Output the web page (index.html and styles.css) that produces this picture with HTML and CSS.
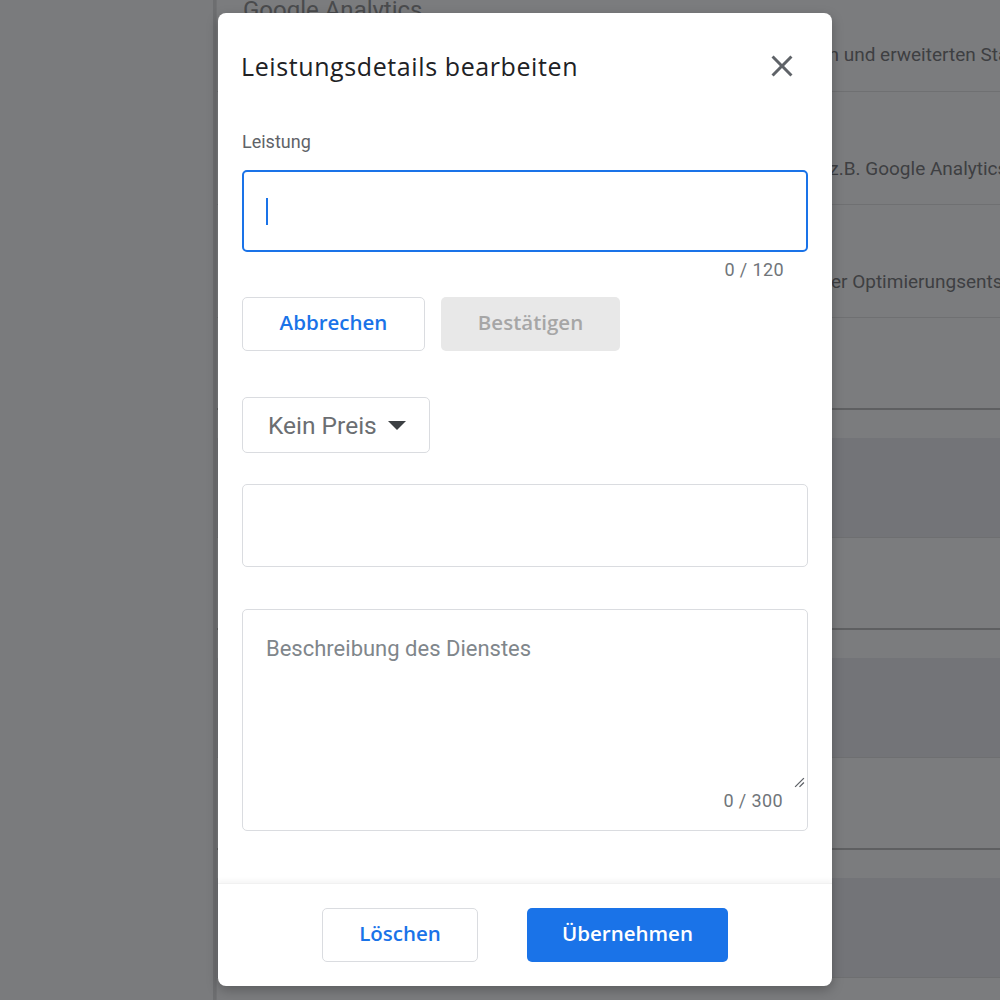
FILE: index.html
```html
<!DOCTYPE html>
<html lang="de">
<head>
    <meta charset="UTF-8">
    <meta name="viewport" content="width=device-width, initial-scale=1.0">
    <title>Leistungsdetails bearbeiten</title>

    <link rel="stylesheet" href="styles.css">
</head>
<body>
    <!-- Seite im Hintergrund (abgedunkelt) -->
    <div class="page">
        <div class="sidebar"></div>

        <div class="main">
            <div class="section first">
                <div class="row head">
                    <div class="sectionTitle">Google Analytics</div>
                    <div class="rowText">Verknüpfen Sie Ihr Konto um Zugriff auf Besucherdaten, Auswertungen und erweiterten Statistiken zu erhalten</div>
                </div>
                <div class="row">
                    <div class="rowText">Binden Sie externe Tracking- und Analysedienste für Ihre Website ein, z.B. Google Analytics</div>
                </div>
                <div class="row">
                    <div class="rowText">Erhalten Sie persönliche Unterstützung seitens unserer Experten bei der Optimierungsentscheidung</div>
                </div>
                <div class="row empty"></div>
            </div>

            <div class="section">
                <div class="gap"></div>
                <div class="band"></div>
                <div class="plain"></div>
            </div>
            <div class="section">
                <div class="gap"></div>
                <div class="band"></div>
                <div class="plain"></div>
            </div>
            <div class="section">
                <div class="gap"></div>
                <div class="band"></div>
                <div class="plain"></div>
            </div>
        </div>
    </div>

    <!-- Dialog -->
    <div class="modal">
        <div class="modalHeader">
            <h2>Leistungsdetails bearbeiten</h2>
            <button class="closeBtn" aria-label="Schließen">
                <svg width="36" height="36" viewBox="0 0 24 24">
                    <path d="M19 6.41 17.59 5 12 10.59 6.41 5 5 6.41 10.59 12 5 17.59 6.41 19 12 13.41 17.59 19 19 17.59 13.41 12z" fill="#5f6368"/>
                </svg>
            </button>
        </div>

        <div class="modalBody">
            <label class="fieldLabel" for="itemTitle">Leistung</label>
            <div class="inputBox focused">
                <span class="caret"></span>
            </div>
            <div class="counter">0 / 120</div>

            <div class="editBtns">
                <button class="btn outline">Abbrechen</button>
                <button class="btn disabled">Bestätigen</button>
            </div>

            <div class="priceSelect">
                <span>Kein Preis</span>
                <svg width="18" height="9" viewBox="7 10 10 5">
                    <path d="M7 10l5 5 5-5z" fill="#3c4043"/>
                </svg>
            </div>

            <div class="inputBox plainBox"></div>

            <div class="textareaBox">
                <div class="placeholder">Beschreibung des Dienstes</div>
                <div class="counter inside">0 / 300</div>
                <svg class="resize" width="11" height="11" viewBox="0 0 10 10">
                    <path d="M1 9 9 1M5 9 9 5" stroke="#5f6368" stroke-width="1.2"/>
                </svg>
            </div>
        </div>

        <div class="modalFooter">
            <button class="btn outline wide">Löschen</button>
            <button class="btn primary">Übernehmen</button>
        </div>
    </div>
</body>
</html>
```

FILE: styles.css
```css
body {
    margin: 0;
    width: 1000px;
    height: 1000px;
    overflow: hidden;
    background-color: #7a7b7d;
    font-family: Roboto, "Liberation Sans", Arial, sans-serif;
}

/* Hintergrundseite */
.page {
    display: flex;
    height: 1000px;
    overflow: hidden;
}

.sidebar {
    width: 213px;
    border-right: 3px solid #6d6e70;
    background-color: #7a7b7d;
}

.main {
    flex: 1;
    background-color: #7b7c7e;
    border-left: 1px solid #727375;
    overflow: hidden;
}

.section {
    border-bottom: 2px solid #5e5f61;
}

.row {
    height: 113px;
    border-bottom: 1px solid #6f7072;
    box-sizing: border-box;
    padding-left: 28px;
    display: flex;
    flex-direction: column;
    justify-content: flex-end;
    padding-bottom: 24px;
    white-space: nowrap;
    overflow: hidden;
}

.row.head {
    height: 92px;
    justify-content: space-between;
    padding-left: 26px;
    padding-top: 0;
    padding-bottom: 25px;
}

.row.empty {
    height: 90px;
    border-bottom: none;
}

.sectionTitle {
    font-size: 24px;
    color: #4a4b4d;
    margin-top: -4px;
}

.rowText {
    font-size: 19px;
    color: #3e3f42;
}

.gap {
    height: 28px;
}

.band {
    height: 99px;
    background-color: #737478;
    border-bottom: 1px solid #6e6f71;
}

.plain {
    height: 90px;
}

/* Dialog */
.modal {
    position: absolute;
    left: 218px;
    top: 13px;
    width: 614px;
    height: 973px;
    background-color: #fff;
    border-radius: 8px;
    box-shadow: 0 4px 12px rgba(0, 0, 0, 0.25);
    display: flex;
    flex-direction: column;
    box-sizing: border-box;
}

.modalHeader {
    display: flex;
    align-items: center;
    justify-content: space-between;
    padding: 36px 32px 0 23px;
    height: 70px;
    box-sizing: border-box;
}

.modalHeader h2 {
    margin: 0;
    font-family: "Open Sans", Roboto, sans-serif;
    font-weight: 400;
    font-size: 25px;
    letter-spacing: 0.6px;
    color: #202124;
    line-height: 36px;
}

.closeBtn {
    border: none;
    background: none;
    padding: 0;
    width: 36px;
    height: 36px;
    cursor: pointer;
}

.modalBody {
    flex: 1;
    padding: 48px 24px 0 24px;
    display: flex;
    flex-direction: column;
    align-items: flex-start;
}

.fieldLabel {
    font-size: 18px;
    line-height: 22px;
    color: #5f6368;
}

.inputBox {
    width: 100%;
    height: 83px;
    box-sizing: border-box;
    border: 1px solid #dadce0;
    border-radius: 5px;
    margin-top: 17px;
    position: relative;
}

.inputBox.focused {
    height: 82px;
    border: 2px solid #1a73e8;
    display: flex;
    align-items: center;
    padding-left: 22px;
}

.caret {
    width: 2px;
    height: 27px;
    background-color: #1a73e8;
}

.plainBox {
    margin-top: 31px;
}

.counter {
    align-self: flex-end;
    margin-top: 7px;
    margin-right: 24px;
    font-size: 18px;
    letter-spacing: 0.4px;
    line-height: 22px;
    color: #70757a;
}

.editBtns {
    display: flex;
    gap: 16px;
    margin-top: 16px;
}

.btn {
    height: 54px;
    box-sizing: border-box;
    padding: 0 0 4px 0;
    border-radius: 5px;
    font-family: "Open Sans", Roboto, sans-serif;
    font-weight: 600;
    font-size: 20.5px;
    cursor: pointer;
}

.btn.outline {
    width: 183px;
    background-color: #fff;
    border: 1px solid #dadce0;
    color: #1a73e8;
}

.btn.disabled {
    width: 179px;
    background-color: #e8e8e8;
    border: none;
    color: #a6a6a6;
}

.btn.wide {
    width: 156px;
}

.btn.primary {
    width: 201px;
    background-color: #1a73e8;
    border: none;
    color: #fff;
}

.priceSelect {
    margin-top: 46px;
    height: 56px;
    box-sizing: border-box;
    border: 1px solid #dadce0;
    border-radius: 5px;
    padding: 0 23px 0 25px;
    display: flex;
    align-items: center;
    gap: 11px;
    font-size: 24.5px;
    color: #6b6e72;
}

.textareaBox {
    margin-top: 42px;
    width: 100%;
    height: 222px;
    box-sizing: border-box;
    border: 1px solid #dadce0;
    border-radius: 5px;
    position: relative;
    padding: 26px 23px;
}

.placeholder {
    font-size: 22px;
    color: #80868b;
}

.counter.inside {
    position: absolute;
    right: 24px;
    bottom: 18px;
    margin: 0;
}

.resize {
    position: absolute;
    right: 2px;
    bottom: 42px;
}

.modalFooter {
    height: 103px;
    box-sizing: border-box;
    display: flex;
    justify-content: center;
    align-items: center;
    gap: 49px;
    box-shadow: 0 -3px 4px rgba(0, 0, 0, 0.04);
    border-top: 1px solid #f1f1f1;
}
```
